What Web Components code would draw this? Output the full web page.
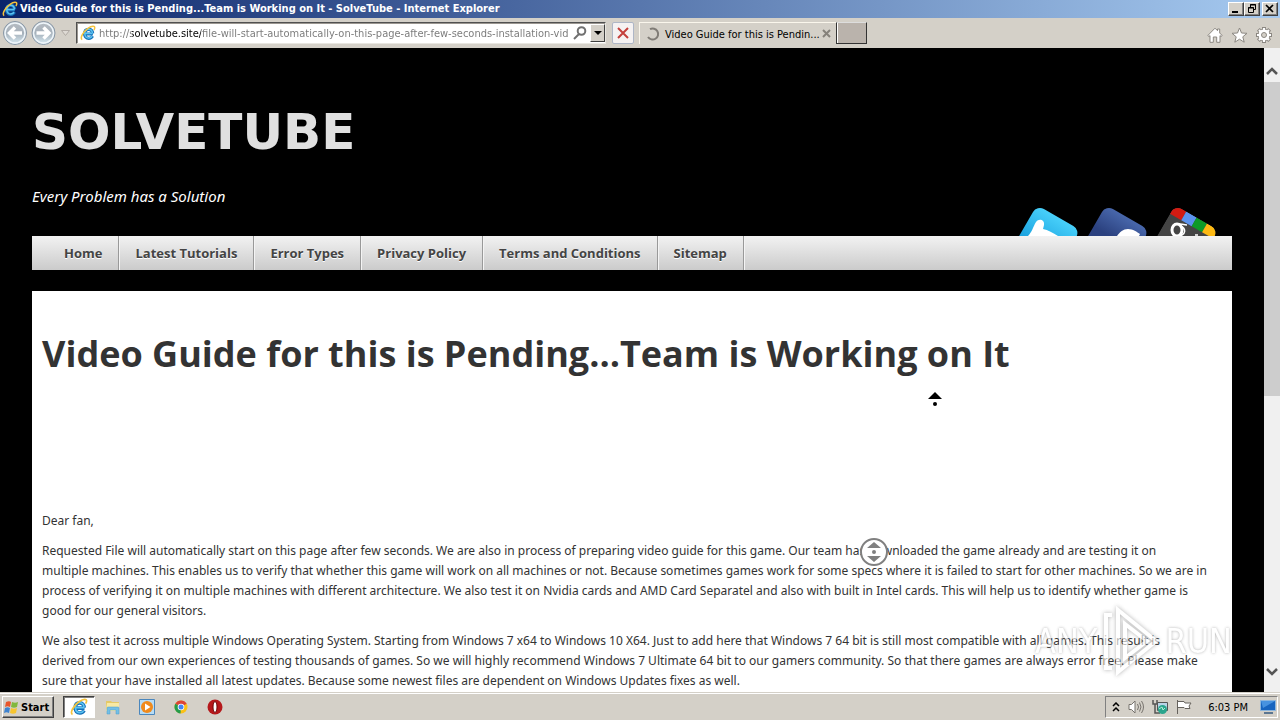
<!DOCTYPE html>
<html lang="en">
<head>
<meta charset="utf-8">
<title>Video Guide for this is Pending...Team is Working on It - SolveTube</title>
<style>
html, body { height: 100%; margin: 0; }
body { font-family: "DejaVu Sans Condensed", "DejaVu Sans", sans-serif; font-size: 11px; color: #000; overflow: hidden; }
</style>
</head>
<body>
<desktop-shell>
  <title-bar slot="title">Video Guide for this is Pending...Team is Working on It - SolveTube - Internet Explorer</title-bar>
  <browser-toolbar slot="toolbar">Video Guide for this is Pendin...</browser-toolbar>
  <site-page slot="page">
    <site-header slot="header"></site-header>
    <site-nav slot="nav"></site-nav>
    <site-article slot="article">
      <span slot="title">Video Guide for this is Pending…Team is Working on It</span>
      <p>Dear fan,</p>
      <p>Requested File will automatically start on this page after few seconds. We are also in process of preparing video guide for this game. Our team has downloaded the game already and are testing it on<br>multiple machines. This enables us to verify that whether this game will work on all machines or not. Because sometimes games work for some specs where it is failed to start for other machines. So we are in<br>process of verifying it on multiple machines with different architecture. We also test it on Nvidia cards and AMD Card Separatel and also with built in Intel cards. This will help us to identify whether game is<br>good for our general visitors.</p>
      <p>We also test it across multiple Windows Operating System. Starting from Windows 7 x64 to Windows 10 X64. Just to add here that Windows 7 64 bit is still most compatible with all games. This result is<br>derived from our own experiences of testing thousands of games. So we will highly recommend Windows 7 Ultimate 64 bit to our gamers community. So that there games are always error free. Please make<br>sure that your have installed all latest updates. Because some newest files are dependent on Windows Updates fixes as well.</p>
    </site-article>
  </site-page>
  <page-scrollbar slot="scrollbar"></page-scrollbar>
  <task-bar slot="taskbar"></task-bar>
</desktop-shell>

<script>
function define(name, html) {
  const template = document.createElement('template');
  template.innerHTML = html;
  customElements.define(name, class extends HTMLElement {
    constructor() {
      super();
      this.attachShadow({ mode: 'open' }).append(template.content.cloneNode(true));
    }
  });
}

define('ie-logo', `
<style>:host{display:block;width:16px;height:16px;flex:none} svg{display:block;width:100%;height:100%}</style>
<svg viewBox="0 0 16 16" fill="none">
  <path d="M12.9 9H4.6c0-3 1.600-4.700 4-4.700 2.300 0 3.900 1.800 4.100 4.200M4.700 9c.2 2.700 1.700 4.300 4.100 4.300 1.700 0 3-.8 3.700-2.200" stroke="#1671b8" stroke-width="3.200"/>
  <path d="M12.600 8.600H4.800c0-2.700 1.500-4.400 3.700-4.400 2.200 0 3.700 1.600 4 3.800M4.800 9c.3 2.500 1.700 4 3.800 4 1.500 0 2.700-.6 3.500-1.700" stroke="#5cc3f1" stroke-width="1.500"/>
  <path d="M2.200 14.600C-.6 13.200 3.500 6.300 8 3.300c3.800-2.600 7.200-2.900 6.700-.2-.1.700-.4 1.300-.8 1.900" stroke="#f5c33c" stroke-width="1.500"/>
</svg>`);

define('desktop-shell', `
<style>
:host{display:flex;flex-direction:column;height:100vh;background:#d4d0c8}
.view{flex:1;min-height:0;display:flex;position:relative;background:#000}
.page{flex:1;min-width:0;overflow:hidden;position:relative}
.mark{position:absolute;right:32px;bottom:16px;display:flex;align-items:center;gap:6px;font-size:34px;line-height:70px;color:#fff;opacity:.65;text-shadow:0 0 3px #888}
.mark svg{width:56px;height:70px;filter:drop-shadow(0 0 2px #888)}
.origin,.pointer{position:absolute}
.origin{left:859px;top:489px}
.pointer{left:928px;top:344px}
</style>
<slot name="title"></slot>
<slot name="toolbar"></slot>
<div class="view">
  <div class="page">
    <slot name="page"></slot>
    <div class="mark"><span>ANY</span><svg viewBox="0 0 56 70" fill="none" stroke="#fff" stroke-width="4"><path d="M15 4v62l38-31zM22 18v34l22-17zM9 9H3v53h6"/></svg><span>RUN</span></div>
    <svg class="origin" width="30" height="30" viewBox="0 0 30 30"><circle cx="15" cy="15" r="13" fill="#fff" stroke="#808080" stroke-width="2"/><path d="M8 11l7-6 7 6zM8 19l7 6 7-6z" fill="#808080"/><circle cx="15" cy="15" r="2" fill="#808080"/></svg>
    <svg class="pointer" width="14" height="14" viewBox="0 0 14 14"><path d="M0 7l7-7 7 7z"/><circle cx="7" cy="12" r="2"/></svg>
  </div>
  <slot name="scrollbar"></slot>
</div>
<slot name="taskbar"></slot>`);

define('title-bar', `
<style>
:host{display:flex;align-items:center;height:18px;padding:0 2px;background:linear-gradient(90deg,#0a246a,#a6caf0);color:#fff;font-weight:700}
.text{flex:1;padding-left:2px;white-space:nowrap;line-height:18px}
button{box-sizing:border-box;width:16px;height:14px;padding:0;border:1px solid;border-color:#fff #404040 #404040 #fff;box-shadow:inset -1px -1px #808080;background:#d4d0c8}
button:last-child{margin-left:2px}
button svg{display:block;width:14px;height:12px}
</style>
<ie-logo></ie-logo>
<span class="text"><slot></slot></span>
<button aria-label="Minimize"><svg viewBox="0 0 14 12"><path d="M3 8h6v2H3z"/></svg></button>
<button aria-label="Restore"><svg viewBox="0 0 14 12" fill="none" stroke="#000"><path d="M5.500 4V1.500h5v5H9M5 2h6M3.500 4.500h5v5h-5zM3 5h6"/></svg></button>
<button aria-label="Close"><svg viewBox="0 0 14 12" stroke="#000" stroke-width="1.700"><path d="M3 2l7 7M10 2L3 9"/></svg></button>`);

define('browser-toolbar', `
<style>
:host{display:flex;align-items:center;box-sizing:border-box;height:30px;padding:0 8px 0 2px;background:#d4d0c8}
.history{display:flex;align-items:center;width:74px;flex:none}
button{padding:0;border:0;background:none;flex:none}
svg{display:block}
.address{display:flex;align-items:center;box-sizing:border-box;width:530px;height:22px;padding-left:3px;background:#fff;border:1px solid;border-color:#505050 #e8e6e0 #e8e6e0 #505050;box-shadow:inset 1px 1px #9a9690;flex:none}
input{flex:1;min-width:0;height:20px;box-sizing:border-box;margin:0 4px 0 3px;padding:1px 0 0;border:0;outline:0;font:inherit;line-height:18px;color:#777;background:linear-gradient(90deg,#777 0 33px,#000 33px 102px,#777 102px);-webkit-background-clip:text;background-clip:text;-webkit-text-fill-color:transparent}
.drop{width:15px;height:18px;margin-left:3px;background:#d4d0c8;border:1px solid;border-color:#fff #404040 #404040 #fff;display:grid;place-items:center}
.stop{width:22px;height:22px;margin-left:6px;background:#f5f2f2;border:1px solid #aeb6c6;border-radius:2px;display:grid;place-items:center}
.tab{display:flex;align-items:center;box-sizing:border-box;width:197px;height:22px;margin-left:5px;padding:0 5px 0 6px;border:1px solid #faf6ec;border-width:1px 0 0 1px;flex:none}
.tab span{flex:1;margin-left:5px;padding-top:1px;white-space:nowrap}
.new{box-sizing:border-box;width:31px;height:22px;background:#bab3ac;border:1px solid #333;border-top-color:#ddd;box-shadow:inset 1px 0 #fff}
.tools{display:flex;gap:8px;margin-left:auto;padding-top:4px}
</style>
<div class="history">
  <button aria-label="Back"><svg width="27" height="26" viewBox="0 0 27 26"><defs><linearGradient id="g" x2="0" y2="1"><stop stop-color="#b9bec4"/><stop offset=".5" stop-color="#a5b0ba"/><stop offset="1" stop-color="#d8ecf5"/></linearGradient></defs><circle cx="13" cy="13" r="11.500" fill="url(#g)" stroke="#8897a6"/><circle cx="13" cy="13" r="10" fill="none" stroke="#eef5fa" stroke-width="1.500"/><path d="M20 13H8m5-5.500L7.500 13l5.500 5.500" stroke="#fff" stroke-width="3.500" fill="none"/></svg></button>
  <button aria-label="Forward"><svg width="28" height="26" viewBox="0 0 27 26"><defs><linearGradient id="h" x2="0" y2="1"><stop stop-color="#b9bec4"/><stop offset=".5" stop-color="#a5b0ba"/><stop offset="1" stop-color="#d8ecf5"/></linearGradient></defs><circle cx="14" cy="13" r="11.500" fill="url(#h)" stroke="#8897a6"/><circle cx="14" cy="13" r="10" fill="none" stroke="#eef5fa" stroke-width="1.500"/><path d="M7 13h12m-5-5.500l5.500 5.500-5.500 5.500" stroke="#fff" stroke-width="3.500" fill="none"/></svg></button>
  <button aria-label="Recent pages"><svg width="16" height="12" viewBox="0 0 16 12"><path d="M4.500 3.500h8l-4 5z" fill="#dedad4" stroke="#b0aaa4"/></svg></button>
</div>
<div class="address">
  <ie-logo></ie-logo>
  <input type="text" aria-label="Address" value="http://solvetube.site/file-will-start-automatically-on-this-page-after-few-seconds-installation-video-guide">
  <svg width="14" height="14" viewBox="0 0 14 14" fill="none" stroke="#707070" stroke-width="2"><circle cx="8.500" cy="5" r="3.800"/><path d="M6 8l-5 5"/></svg>
  <button class="drop" aria-label="Show address list"><svg width="8" height="5"><path d="M0 0h8L4 4z"/></svg></button>
</div>
<button class="stop" aria-label="Stop"><svg width="12" height="12" viewBox="0 0 12 12" stroke="#c4403c" stroke-width="2"><path d="M1 1l10 10M11 1L1 11"/></svg></button>
<div class="tab">
  <svg width="14" height="14" viewBox="0 0 14 14" fill="none" stroke="#807c76" stroke-width="2"><path d="M4 2.200A5.500 5.500 0 1 1 2 10"/></svg>
  <span><slot></slot></span>
  <button aria-label="Close tab"><svg width="9" height="9" viewBox="0 0 9 9" stroke="#85817a" stroke-width="2"><path d="M1 1l7 7M8 1L1 8"/></svg></button>
</div>
<button class="new" aria-label="New tab"></button>
<div class="tools">
  <button aria-label="Home"><svg width="16" height="16" viewBox="0 0 16 16" fill="#fff" stroke="#8b8781"><path d="M.8 8.500L8 1.200l2.500 2.500V2h2.200v4L15.200 8.500l-1.200 1-1-.9v6.700H9.700V10H6.300v5.300H3V8.600l-1 .9z"/></svg></button>
  <button aria-label="Favorites"><svg width="17" height="16" viewBox="0 0 17 16" fill="#fff" stroke="#8b8781"><path d="M8.500 1l2 5 5.500.3-4.200 3.500 1.400 5.400-4.700-3-4.700 3 1.400-5.400L1 6.300 6.500 6z"/></svg></button>
  <button aria-label="Tools"><svg width="16" height="16" viewBox="0 0 16 16"><path d="M8 0v16M0 8h16M2.300 2.300l11.400 11.400M13.700 2.300L2.300 13.700" stroke="#8b8781" stroke-width="4"/><circle cx="8" cy="8" r="6" fill="#fff" stroke="#8b8781"/><path d="M8 1v14M1 8h14M3 3l10 10M13 3L3 13" stroke="#fff" stroke-width="2.200"/><circle cx="8" cy="8" r="2.500" fill="#d4d0c8" stroke="#8b8781"/></svg></button>
</div>`);

define('site-page', `
<style>:host{display:block;padding:0 32px;font-family:"Noto Sans","Open Sans",sans-serif}</style>
<slot name="header"></slot><slot name="nav"></slot><slot name="article"></slot>`);

define('site-header', `
<style>
:host{display:flex;justify-content:space-between;align-items:flex-end;height:188px;color:#fff}
.brand{align-self:flex-start;padding-top:48px}
h1{margin:0;font:700 50px/72px "DejaVu Sans",sans-serif;color:#e0e0e0}
p{margin:18px 0 0;font-size:15px;line-height:20px;font-style:italic}
.social{display:flex;padding-right:11px}
.social a,svg{display:block}
</style>
<div class="brand"><h1>SOLVETUBE</h1><p>Every Problem has a Solution</p></div>
<div class="social">
  <a href="#" aria-label="Twitter"><svg width="69" height="30" viewBox="0 0 69 30"><defs><linearGradient id="t" x2="0" y2="1"><stop stop-color="#48d0fa"/><stop offset="1" stop-color="#078ed3"/></linearGradient></defs><rect width="50" height="50" rx="8" transform="translate(23 -1) rotate(30)" fill="url(#t)"/><path d="M14 30c4-4 5-9 8-14 3-4 9-2 8 3l-1 4c5 1 10 4 15 7z" fill="#fff"/></svg></a>
  <a href="#" aria-label="Facebook"><svg width="69" height="30" viewBox="0 0 69 30"><defs><linearGradient id="f" x2="0" y2="1"><stop stop-color="#4867ab"/><stop offset=".5" stop-color="#2b417f"/></linearGradient></defs><rect width="50" height="50" rx="8" transform="translate(23 -1) rotate(30)" fill="url(#f)"/><path d="M34 30c3-4 6-7 11-7 5 0 9 3 12 5l-1 2z" fill="#fff"/></svg></a>
  <a href="#" aria-label="Google Plus"><svg width="69" height="30" viewBox="0 0 69 30"><defs><clipPath id="c"><rect width="50" height="50" rx="8"/></clipPath></defs><g transform="translate(23 -1) rotate(30)" clip-path="url(#c)"><path fill="#444" d="M0 0h50v50H0z"/><path fill="#d31b12" d="M0 0h13v10H0z"/><path fill="#5b93ef" d="M13 0h12v10H13z"/><path fill="#0c9a28" d="M25 0h12v10H25z"/><path fill="#fdb913" d="M37 0h13v10H37z"/></g><g fill="none" stroke="#fff"><ellipse cx="25" cy="24" rx="5" ry="6" stroke-width="3"/><path d="M23 18c4-1 8 1 12 1M29 20c5 3 5 8-1 10M43 29h3" stroke-width="1.500"/></g></svg></a>
</div>`);

define('site-nav', `
<style>
:host{display:block}
nav{display:flex;height:34px;padding-left:16px;background:linear-gradient(#f2f2f2,#cbcbcb)}
a{box-sizing:border-box;padding:0 16px;border-right:1px solid #999;box-shadow:1px 0 #f4f4f4;color:#444;font:700 13px/34px "Open Sans",sans-serif;text-decoration:none;text-shadow:0 1px #fff;white-space:nowrap}
</style>
<nav><a href="#">Home</a><a href="#">Latest Tutorials</a><a href="#">Error Types</a><a href="#">Privacy Policy</a><a href="#">Terms and Conditions</a><a href="#">Sitemap</a></nav>`);

define('site-article', `
<style>
:host{display:block;margin-top:21px;padding:36px 10px 40px;background:#fff;color:#333;font-size:12px;line-height:20px}
h2{margin:0 0 130px;font-family:"Open Sans",sans-serif;font-size:36px;line-height:54px;font-weight:700;color:#333;white-space:nowrap}
::slotted(p){margin:0 0 10px;white-space:nowrap}
</style>
<h2><slot name="title"></slot></h2>
<slot></slot>`);

define('page-scrollbar', `
<style>
:host{display:flex;flex-direction:column;box-sizing:border-box;width:16px;padding:14px 0 12px;background:#f0f0f0;flex:none}
button{display:grid;place-items:center;width:16px;height:17px;padding:0;border:0;background:none}
.track{flex:1;padding-top:3px;display:flex;flex-direction:column}
.thumb{height:54%;background:#cdcdcd}
</style>
<button aria-label="Scroll up"><svg width="12" height="8" viewBox="0 0 12 8" fill="none" stroke="#555" stroke-width="2.500"><path d="M1 7l5-5 5 5"/></svg></button>
<div class="track"><div class="thumb"></div></div>
<button aria-label="Scroll down"><svg width="12" height="8" viewBox="0 0 12 8" fill="none" stroke="#555" stroke-width="2.500"><path d="M1 1l5 5 5-5"/></svg></button>`);

define('task-bar', `
<style>
:host{display:flex;align-items:center;box-sizing:border-box;height:28px;padding:2px 2px 0;background:#d4d0c8;box-shadow:inset 0 1px #d4d0c8,inset 0 2px #fff}
button{padding:0;border:0;background:none;font:inherit;color:#000;flex:none}
svg{display:block}
.start{display:flex;align-items:center;gap:2px;box-sizing:border-box;width:52px;height:22px;padding-left:1px;border:1px solid;border-color:#fff #404040 #404040 #fff;box-shadow:inset -1px -1px #808080;font-weight:700}
.active{display:grid;place-items:center;box-sizing:border-box;width:32px;height:22px;margin:0 10px 0 9px;background:#fff;border:1px solid;border-color:#404040 #fff #fff #404040;box-shadow:inset 1px 1px #808080}
.active ie-logo{width:18px;height:18px}
.apps{display:flex;gap:18px}
.tray{display:flex;align-items:center;gap:8px;box-sizing:border-box;height:22px;margin-left:auto;padding:0 1px 0 6px;border:1px solid;border-color:#808080 #fff #fff #808080}
time{margin:0 4px 0 8px;white-space:nowrap}
</style>
<button class="start"><svg width="15" height="16" viewBox="0 0 15 16"><path d="M2 3c2-1 4-1 5 0L6 8C4 7 3 7 1 8z" fill="#e8562b"/><path d="M8 3c2 1 4 1 6 0l-1 5c-2 1-4 1-6 0z" fill="#81b83c"/><path d="M1 9c2-1 3-1 5 0l-1 5c-2-1-3-1-5 0z" fill="#3e83d0"/><path d="M7 9c2 1 4 1 6 0l-1 5c-2 1-4 1-6 0z" fill="#f7c52f"/></svg>Start</button>
<button class="active" aria-label="Internet Explorer"><ie-logo></ie-logo></button>
<div class="apps">
  <button aria-label="Explorer"><svg width="16" height="16" viewBox="0 0 16 16"><path d="M1 2h5l1 1h7v8H1z" fill="#e4c968"/><path d="M2 4h12v8H1z" fill="#f7e9a4"/><path d="M2 15V9q0-1 1-1h10q1 0 1 1v6h-3v-4H5v4z" fill="#74bfe5" stroke="#4b9dcc" stroke-width=".5"/></svg></button>
  <button aria-label="Media Player"><svg width="16" height="16" viewBox="0 0 16 16"><path d="M.5.5h15v15H.5z" fill="#b7dcf5" stroke="#4b87bd"/><circle cx="8" cy="8" r="6" fill="#f08a1c"/><path d="M6 4.500v7L11.500 8z" fill="#fff"/></svg></button>
  <button aria-label="Chrome"><svg width="16" height="16" viewBox="0 0 16 16"><circle cx="8" cy="8" r="6.500" fill="#fbc116"/><path d="M8 8L2.300 4.800a6.500 6.500 0 0 1 11.400 0z" fill="#dc4437"/><path d="M8 8L2.300 4.800A6.500 6.500 0 0 0 7.500 14.500z" fill="#259b4b"/><circle cx="8" cy="8" r="3.300" fill="#fff"/><circle cx="8" cy="8" r="2.500" fill="#4285f4"/></svg></button>
  <button aria-label="Opera"><svg width="16" height="16" viewBox="0 0 16 16"><circle cx="8" cy="8" r="7.500" fill="#b5181b"/><ellipse cx="8" cy="8" rx="2" ry="5.500" fill="#fff" stroke="#6c0508"/></svg></button>
</div>
<div class="tray">
  <svg width="8" height="11" viewBox="0 0 8 11" fill="none" stroke="#000" stroke-width="1.500"><path d="M1 4l3-3 3 3M1 9l3-3 3 3"/></svg>
  <svg width="16" height="16" viewBox="0 0 16 16" fill="#fff" stroke="#77736d"><path d="M1 5.500h2.500L7 2v12l-3.500-3.500H1z"/><path d="M9.500 5q2 3 0 6M11.500 3.500q3 4.500 0 9M13.500 2q4 6 0 12" fill="none"/></svg>
  <svg width="16" height="16" viewBox="0 0 16 16"><path d="M5.500 3.500h10v8h-10z" fill="#b9d4e8" stroke="#555"/><path d="M1 1v4h4V1M3 5v9h5" fill="none" stroke="#555" stroke-width="1.500"/><circle cx="10.500" cy="10.500" r="4.500" fill="#2aa58d"/><path d="M7 10l3-2 1 3 2-2" stroke="#b6ecd6" fill="none"/></svg>
  <svg width="16" height="16" viewBox="0 0 16 16" fill="#fff" stroke="#66625d"><path d="M1.500 1v14M2 2.500h6l1 1.500h6l-2 3 1 2.500H9L8 8.500H2"/></svg>
  <time>6:03 PM</time>
  <svg width="16" height="14" viewBox="0 0 16 14"><path d="M.5.500h15v10H.5z" fill="#1764bf" stroke="#8cb5dc"/><path d="M1 1h14L3 8z" fill="#4792df"/><path d="M4 12h9v2H4z" fill="#5b7691"/></svg>
</div>`);
</script>
</body>
</html>
